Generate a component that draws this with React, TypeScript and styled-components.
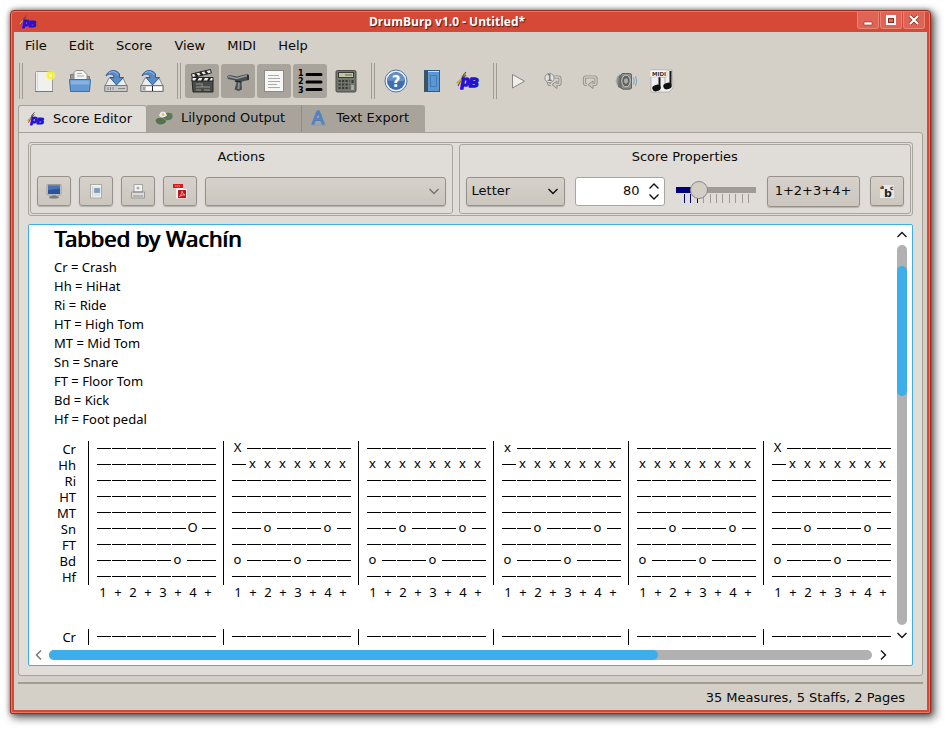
import React from "react";
import styled, { createGlobalStyle, css } from "styled-components";

const ui = `"DejaVu Sans", sans-serif`;
const scoreFont = `"Noto Sans", sans-serif`;

const GlobalStyle = createGlobalStyle`
  *, *::before, *::after { box-sizing: border-box; }
  html, body { margin: 0; background: #fff; }
  button, input, select { font: inherit; color: inherit; margin: 0; }
  svg { display: block; flex: none; }
`;

const Desktop = styled.div`
  display: flex;
  min-height: 100vh;
  padding: 10px 16px 16px 10px;
  font: 13px/18px ${ui};
  color: #0a0a0a;
`;

const Window = styled.div`
  flex: 1;
  min-width: 0;
  display: flex;
  flex-direction: column;
  background: #d4cfc7;
  border: 1px solid #9c2c20;
  border-radius: 4px 4px 2px 2px;
  box-shadow: inset 0 0 0 1px #e8796a, inset 0 0 0 3px #d64937,
    3px 3px 8px 1px rgba(0, 0, 0, 0.6), 0 0 5px rgba(0, 0, 0, 0.4);
  padding: 1px 3px 3px;
`;

const TitleBar = styled.header`
  display: flex;
  align-items: center;
  height: 20px;
  background: #d64937;
  color: #fff;
  padding: 0 2px 0 5px;
`;

const Caption = styled.h1`
  flex: 1;
  margin: 0;
  font: bold 12px/18px "Open Sans", sans-serif;
  text-align: center;
  text-shadow: 1px 1px 1px rgba(60, 10, 5, 0.8);
`;

const Controls = styled.div`
  align-self: start;
  display: flex;
  gap: 1px;
`;

const ControlButton = styled.button`
  display: flex;
  align-items: center;
  justify-content: center;
  width: 22px;
  height: 17px;
  padding: 0;
  border: 1px solid #e88476;
  border-top: 0;
  border-radius: 0 0 3px 3px;
  background: #de6455;
`;

const MenuBar = styled.nav`
  display: flex;
  padding: 5px 0;
`;

const MenuItem = styled.button`
  border: 0;
  background: none;
  padding: 0 11px;
  line-height: 18px;
`;

const ToolBar = styled.div`
  display: flex;
  gap: 8px;
  padding: 3px 5px 6px;
`;

const ToolGroup = styled.div`
  display: flex;
  align-items: center;
  gap: 2px;
  height: 36px;
`;

const Handle = styled.span`
  width: 4px;
  height: 36px;
  margin-right: 2px;
  border: solid #a09c95;
  border-width: 0 1px;
`;

const ToolButton = styled.button<{ $on?: boolean }>`
  display: flex;
  align-items: center;
  justify-content: center;
  width: 34px;
  height: 34px;
  padding: 0;
  border: 0;
  border-radius: 3px;
  background: ${(p) => (p.$on ? "#a8a49c" : "none")};
`;

const TabList = styled.div`
  display: flex;
  padding: 0 4px;
  height: 27px;
`;

const Tab = styled.button<{ $active?: boolean }>`
  display: flex;
  align-items: center;
  gap: 8px;
  border: 0;
  white-space: nowrap;
  ${(p) =>
    p.$active
      ? css`
          height: 28px;
          padding: 0 14px 2px 8px;
          background: #e0ddd8;
          border: 1px solid #a5a199;
          border-bottom: 0;
          border-radius: 3px 3px 0 0;
        `
      : css`
          height: 27px;
          padding: 0 16px 1px 8px;
          background: #a8a49c;
          border-right: 1px solid #918d86;
          &:last-child {
            border-right: 0;
            border-top-right-radius: 3px;
          }
        `}
`;

const Pane = styled.main`
  flex: 1;
  display: flex;
  flex-direction: column;
  gap: 8px;
  margin: 0 4px;
  padding: 9px;
  background: #e0ddd8;
  border: 1px solid #a5a199;
  border-radius: 0 3px 3px 3px;
`;

const Panels = styled.div`
  display: grid;
  grid-template-columns: minmax(0, 423fr) minmax(0, 453fr);
  gap: 6px;
  padding: 1px;
  border: 1px solid #a9a59e;
  border-radius: 3px;
`;

const Panel = styled.section`
  border: 1px solid #a9a59e;
  border-radius: 3px;
  padding: 3px 6px 6px;
`;

const PanelTitle = styled.h2`
  margin: 0 0 9px;
  font: inherit;
  line-height: 18px;
  text-align: center;
`;

const PanelRow = styled.div<{ $gap: number }>`
  display: flex;
  align-items: center;
  gap: ${(p) => p.$gap}px;
  height: 32px;
`;

const raised = css`
  border: 1px solid #96928b;
  border-radius: 3px;
  background: linear-gradient(#d6d1ca, #cbc6be);
  box-shadow: 0 1px 1px rgba(0, 0, 0, 0.2);
`;

const PushButton = styled.button<{ $wide?: boolean }>`
  ${raised}
  display: flex;
  align-items: center;
  justify-content: center;
  flex: none;
  width: ${(p) => (p.$wide ? 93 : 34)}px;
  height: ${(p) => (p.$wide ? 31 : 30)}px;
  padding: 0;
`;

const SelectBox = styled.div<{ $width?: number }>`
  display: grid;
  align-items: center;
  flex: ${(p) => (p.$width ? `0 0 ${p.$width}px` : "1")};
  > * { grid-area: 1 / 1; }
  > svg { justify-self: end; margin-right: 6px; pointer-events: none; }
`;

const Select = styled.select`
  ${raised}
  appearance: none;
  width: 100%;
  height: 29px;
  padding: 0 22px 0 5px;
`;

const Spin = styled.div`
  display: flex;
  align-items: center;
  flex: none;
  width: 90px;
  height: 29px;
  padding-right: 4px;
  background: #fff;
  border: 1px solid #aaa69f;
  border-radius: 3px;
`;

const SpinInput = styled.input`
  flex: 1;
  width: 0;
  min-width: 0;
  padding: 0 8px 0 0;
  border: 0;
  background: none;
  text-align: right;
  outline: 0;
`;

const SpinArrows = styled.div`
  display: flex;
  flex-direction: column;
  gap: 3px;
`;

const PlainButton = styled.button`
  display: flex;
  align-items: center;
  justify-content: center;
  padding: 0;
  border: 0;
  background: none;
`;

const SliderBox = styled.div`
  flex: 0 0 82px;
  display: grid;
  align-content: start;
  justify-content: center;
  height: 32px;
  padding-top: 6px;
  > * { grid-area: 1 / 1; }
`;

const Slider = styled.input`
  appearance: none;
  width: 80px;
  height: 18px;
  background: linear-gradient(90deg, #00007f 24px, #a09c95 24px) center / 80px 6px no-repeat;
  &::-webkit-slider-thumb {
    appearance: none;
    width: 18px;
    height: 18px;
    border: 1px solid #8d8982;
    border-radius: 50%;
    background: #d3cec6;
  }
`;

const Canvas = styled.div`
  flex: 1;
  display: grid;
  grid-template-columns: minmax(0, 1fr) 21px;
  grid-template-rows: 1fr 20px;
  background: #fff;
  border: 1px solid #3daee9;
  border-radius: 2px;
`;

const Score = styled.article`
  overflow: hidden;
  height: 420px;
  padding: 0 0 0 25px;
  font: 13px/19px ${scoreFont};
  color: #000;
`;

const ScoreTitle = styled.h2`
  margin: 0 0 6px;
  font: 400 22px/27px ${scoreFont};
  text-shadow: 1px 0 0 #000;
`;

const Legend = styled.ul`
  margin: 0 0 12px;
  padding: 0;
  list-style: none;
`;

const Staff = styled.div`
  display: flex;
  margin-bottom: 28px;
`;

const Labels = styled.div`
  flex: 0 0 22px;
  margin-right: 12px;
  text-align: right;
  line-height: 16px;
`;

const Measure = styled.div`
  flex: 0 0 135px;
`;

const Lines = styled.div`
  border-left: 1px solid #000;
  padding-left: 8px;
`;

const Beats = styled.div`
  display: grid;
  grid-template-columns: repeat(8, 15px);
  height: 16px;
  line-height: 16px;
`;

const Counts = styled(Beats)`
  margin-left: 9px;
`;

const Rest = styled.span`
  width: 14px;
  height: 1px;
  margin-top: 7px;
  background: #000;
`;

const Hit = styled.span`
  width: 11px;
  height: 16px;
  line-height: 13px;
  display: flex;
  justify-content: center;
`;

const Count = styled(Hit)`
  width: 12px;
  line-height: 15px;
`;

const VBar = styled.div`
  display: flex;
  flex-direction: column;
  align-items: center;
  > button { height: 20px; width: 20px; }
`;

const HBar = styled.div`
  grid-column: 1 / -1;
  display: flex;
  align-items: center;
  padding-right: 18px;
  > button { height: 20px; width: 20px; }
  > button:last-child { width: 22px; }
`;

const Track = styled.div<{ $vertical?: boolean }>`
  flex: 1;
  display: flex;
  flex-direction: ${(p) => (p.$vertical ? "column" : "row")};
  ${(p) => (p.$vertical ? "width: 10px; padding-top: 21px;" : "height: 10px;")}
  background: #b1b1b1;
  border-radius: 5px;
`;

const Thumb = styled.div<{ $size: string }>`
  flex: 0 0 ${(p) => p.$size};
  background: #3daee9;
  border-radius: 5px;
`;

const StatusBar = styled.footer`
  margin: 6px 4px 0;
  padding: 5px 18px 3px 0;
  border-top: 2px solid #a19d95;
  text-align: right;
  line-height: 18px;
`;

/* ---------- icons ---------- */

const Chevron = ({ dir, color = "#111" }: { dir: "up" | "down" | "left" | "right"; color?: string }) => {
  const d = {
    up: "M1.5 8 6 3.5 10.5 8",
    down: "M1.5 4 6 8.5 10.5 4",
    left: "M8 1.5 3.5 6 8 10.5",
    right: "M4 1.5 8.5 6 4 10.5",
  }[dir];
  return (
    <svg width="12" height="12" viewBox="0 0 12 12" fill="none" stroke={color} strokeWidth="1.4">
      <path d={d} />
    </svg>
  );
};

const SpinChevron = ({ d }: { d: string }) => (
  <svg width="12" height="8" viewBox="0 0 12 8" fill="none" stroke="#111" strokeWidth="1.4">
    <path d={d} />
  </svg>
);

const Logo = ({ size }: { size: number }) => (
  <svg width={size} height={size} viewBox="0 0 24 24">
    <path d="M2 17 8 5M1 14l9-8M6 8 10 3" stroke="#5b5638" strokeWidth="1.2" fill="none" />
    <path d="M1 15 5 10" stroke="#d8b820" strokeWidth="1.6" />
    <g fill="#2412d2" stroke="#2412d2" strokeWidth="1.6" strokeLinejoin="round" fontFamily="Liberation Sans, sans-serif" fontWeight="700" fontStyle="italic">
      <text x="5" y="17" fontSize="14">p</text>
      <text x="13" y="18" fontSize="13">B</text>
    </g>
  </svg>
);

const NewIcon = () => (
  <svg width="24" height="24" viewBox="0 0 24 24">
    <rect x="3.5" y="2.5" width="17" height="20" rx="1" fill="#f0f0ef" stroke="#9a9a97" />
    <path d="M5.5 3v18" stroke="#d8d8d6" />
    <path d="M3 22.5h18" stroke="#77776f" />
    <circle cx="18.500" cy="6.500" r="5" fill="#fdf66a" opacity=".6" />
    <circle cx="18.500" cy="6.500" r="3.400" fill="#fdf327" />
    <circle cx="18.500" cy="6.500" r="1.500" fill="#fffde0" />
  </svg>
);

const OpenIcon = () => (
  <svg width="24" height="24" viewBox="0 0 24 24">
    <path d="M2.5 20V5.500h6l2 2h11V20z" fill="#9a9a96" stroke="#777" />
    <path d="M6 12V3.500l2-2h7l4 4V12z" fill="#f4f4f3" stroke="#8b8b88" />
    <path d="M9 4.500h5M9 7h7" stroke="#aaa" />
    <path d="M1.500 10.500h21l-1 12H2.500z" fill="#6498d2" stroke="#3c6fad" />
    <path d="M2.500 11.500h19l-.3 4H3z" fill="#86b1e0" />
  </svg>
);

const SaveIcon = ({ label }: { label?: boolean }) => (
  <svg width="24" height="24" viewBox="0 0 24 24">
    <path d="M5 9h14l4 8H1z" fill="#ececea" stroke="#8a8a88" />
    <path d="M.8 16.500h22.400v6H.8z" fill="#c9c9c7" stroke="#777" />
    {label ? (
      <>
        <path d="M6 17.500h16v4H6z" fill="#fff" />
        <path d="M12.500 17v5" stroke="#222" />
        <path d="M4 18v3" stroke="#777" />
      </>
    ) : (
      <path d="M4 18v3M6.500 18v3M9 18v3M14 19.500h7" stroke="#888" />
    )}
    <path d="M2 7C4 1 12-.5 15.500 5v3.500h4L12.500 16 6 8.500h4C10 4.500 5 4 2 7z" fill="#5a8ac6" stroke="#2f5c98" />
    <path d="M5 4c3-2 7-2 9 2" stroke="#9abde5" fill="none" />
  </svg>
);

const ClapperIcon = () => (
  <svg width="24" height="24" viewBox="0 0 24 24">
    <path d="M2 11h21v12H3z" fill="#4a4c49" stroke="#252624" />
    <path d="m1.500 5 19-4.500.8 3.500-19 4.500z" fill="#eee" stroke="#222" />
    <path d="m5 4.500 2.500 3M10 3l2.500 3.500M15 2l2.500 3" stroke="#222" strokeWidth="2.200" />
    <path d="M2 8.500h21v3.500H2z" fill="#eee" stroke="#222" />
    <path d="m6 12 2-3.500M12 12l2-3.500M18 12l2-3.500" stroke="#222" strokeWidth="2.200" />
    <path d="M6 15h5M12 14v4M6 18h14M6 21h5M14 21h6" stroke="#989a96" />
  </svg>
);

const DrumIcon = () => (
  <svg width="24" height="24" viewBox="0 0 24 24">
    <path d="m1 7.500 2-1.500 8 1.500 10-2.500 2 1v5l-7 1.500-.5 2 .5 6-3.500 1.500-4-1.500 2-6.500-1-2.500L2 10z" fill="#474d51" />
    <path d="m2 7.500 9 2 10-3" stroke="#959da2" strokeWidth="1.500" fill="none" />
    <path d="m13 13-.5 7" stroke="#899096" strokeWidth="2" />
    <path d="M22 6v5M9 12l6 1" stroke="#25292b" strokeWidth="1.500" />
  </svg>
);

const PageIcon = () => (
  <svg width="24" height="24" viewBox="0 0 24 24">
    <rect x="2.500" y="1.500" width="19" height="21" fill="#f7f7f6" stroke="#8b8b88" />
    <path d="M6 6.500h11M6 9.500h12M6 12.500h12M6 15.500h9M6 18.500h12" stroke="#aaa" />
  </svg>
);

const NumbersIcon = () => (
  <svg width="28" height="26" viewBox="0 0 28 26">
    <g fontFamily="DejaVu Sans, sans-serif" fontWeight="700" fontSize="8" fill="#000">
      <text x="2" y="8">1</text>
      <text x="2" y="16">2</text>
      <text x="2" y="25">3</text>
    </g>
    <path d="M11 6.500h14M11 14h14M11 21.500h14" stroke="#000" strokeWidth="3" strokeLinecap="round" />
  </svg>
);

const CalculatorIcon = () => (
  <svg width="24" height="24" viewBox="0 0 24 24">
    <rect x="2" y="1.500" width="20" height="21.500" rx="1.500" fill="#73756f" stroke="#4b4c49" />
    <rect x="4.500" y="3.500" width="15" height="5" fill="#c0c6a0" stroke="#3a3b35" />
    <path d="M11 6h7" stroke="#666b4c" />
    <g stroke="#393a37" strokeWidth="2.200" strokeDasharray="2.200 1.300">
      <path d="M4.500 12h11M4.500 15.500h11M4.500 19h11" />
    </g>
    <path d="M18.500 11v3" stroke="#393a37" strokeWidth="2" />
    <path d="M18.500 16v5" stroke="#b0b2ae" strokeWidth="2.500" />
  </svg>
);

const HelpIcon = () => (
  <svg width="24" height="24" viewBox="0 0 24 24">
    <circle cx="12" cy="12" r="11" fill="#f2f4f8" stroke="#4a74ad" />
    <circle cx="12" cy="12" r="9" fill="#3f6dae" />
    <path d="M3.500 12a8.500 8.500 0 0 1 17 0c-5 1-11-1-17 0z" fill="#6790c6" />
    <text x="12" y="17.500" textAnchor="middle" fontFamily="DejaVu Sans, sans-serif" fontWeight="700" fontSize="15" fill="#fff">?</text>
  </svg>
);

const BookIcon = () => (
  <svg width="24" height="24" viewBox="0 0 24 24">
    <rect x="4.500" y="1.500" width="15" height="21" fill="#5b97d2" stroke="#2c5b8c" />
    <rect x="4" y="2" width="4" height="20.500" fill="#3e5360" />
    <path d="M8 2.500h11" stroke="#d3dce6" />
    <rect x="10.500" y="6.500" width="6" height="11" fill="none" stroke="#417db8" />
  </svg>
);

const PlayIcon = () => (
  <svg width="24" height="24" viewBox="0 0 24 24">
    <path d="M6.500 5.500v13.500l12-6.800z" fill="#efeeec" stroke="#8a8883" />
  </svg>
);

const LoopIcon = ({ once }: { once?: boolean }) => {
  const ring = "M9 15.500H8A1.500 1.500 0 0 1 6.500 14V9.500A1.500 1.500 0 0 1 8 8h8.500A1.500 1.500 0 0 1 18 9.500V14a1.500 1.500 0 0 1-1.500 1.500H14";
  return (
    <svg width="24" height="24" viewBox="0 0 24 24">
      <path d={ring} fill="none" stroke="#918e88" strokeWidth="3.200" />
      <path d="m15 12-5 3.700 5 3.800z" fill="#c9c6c0" stroke="#918e88" />
      <path d={ring} fill="none" stroke="#d0cdc7" strokeWidth="1.400" />
      {once && (
        <>
          <circle cx="7.500" cy="9" r="4.600" fill="#e6e4e1" stroke="#94918b" />
          <text x="7.500" y="12" textAnchor="middle" fontFamily="DejaVu Sans, sans-serif" fontWeight="700" fontSize="8" fill="#807d78">1</text>
        </>
      )}
    </svg>
  );
};

const SpeakerIcon = () => (
  <svg width="24" height="24" viewBox="0 0 24 24">
    <path d="M6 5q-8 7 0 14" fill="#8d908c" stroke="#b5b7b3" />
    <path d="m5 7 4-3h7l2 2v13l-2 1.500H9L4 18z" fill="#6d706c" />
    <rect x="7" y="4.500" width="10.500" height="15.500" rx="2" fill="#8c8f89" stroke="#60635f" />
    <ellipse cx="12" cy="12" rx="4.200" ry="5.800" fill="#5f625e" stroke="#c2c5bf" />
    <ellipse cx="12" cy="12" rx="2" ry="2.800" fill="#a9aca6" />
    <path d="M19.500 8.500q1.500 3.500 0 7M21.500 7q2.300 5 0 10" stroke="#7f9fc5" fill="none" />
  </svg>
);

const MidiIcon = () => (
  <svg width="24" height="24" viewBox="0 0 24 24">
    <path d="M1 1h21l1 18-4 4H1z" fill="#efefef" stroke="#aaa" strokeWidth=".8" />
    <path d="M9.500 7v12M20.500 2v14" stroke="#161616" strokeWidth="2" />
    <path d="M11 8h4v10" stroke="#aaa" fill="none" />
    <ellipse cx="6.500" cy="19" rx="4.300" ry="3.200" fill="#111" transform="rotate(-15 6.500 19)" />
    <ellipse cx="17.500" cy="17" rx="4.300" ry="3.200" fill="#111" transform="rotate(-15 17.500 17)" />
    <path d="M0 1h17v7H0z" fill="#fafafa" stroke="#bbb" strokeWidth=".6" />
    <text x="2" y="6.800" fontFamily="DejaVu Sans, sans-serif" fontWeight="700" fontSize="5.500" fill="#333">MIDI</text>
  </svg>
);

const LilyIcon = () => (
  <svg width="18" height="18" viewBox="0 0 18 18">
    <path d="M7 7q4-5 10-2.500 2 5-2.500 6.500Q9 12 7 7z" fill="#5d7a55" />
    <path d="M.5 11q2-3 7-2l4 3q-2 3.500-6.500 3.500-4-.5-4.500-4.500z" fill="#56724d" />
    <path d="M4 6.500q3 4 8 0l-1.500-3-2.500-1-2.500 1z" fill="#ecedf0" />
    <circle cx="8" cy="5.500" r="1.500" fill="#eac74e" />
  </svg>
);

const LetterIcon = () => (
  <svg width="18" height="18" viewBox="0 0 18 18">
    <path d="M1 16h15" stroke="#7f9cc4" />
    <text x="8" y="15" textAnchor="middle" fontFamily="DejaVu Sans, sans-serif" fontWeight="400" fontSize="18" fill="#8fb2e0" stroke="#4f7dbb" strokeWidth="1.200">A</text>
  </svg>
);

const MonitorIcon = () => (
  <svg width="16" height="16" viewBox="0 0 16 16">
    <rect x="1" y="1.500" width="14" height="10.500" rx=".5" fill="#ddd" stroke="#999a97" />
    <rect x="2" y="2.500" width="12" height="8.500" fill="#2c539a" />
    <path d="M2 7V2.500h12v3z" fill="#4a74b9" />
    <path d="M6 12.500h4v1H6z" fill="#777" />
    <ellipse cx="8" cy="14.300" rx="5" ry="1.200" fill="#777a76" />
  </svg>
);

const PreviewIcon = () => (
  <svg width="16" height="16" viewBox="0 0 16 16">
    <rect x="2.500" y="1.500" width="11" height="13.500" fill="#f1f1f0" stroke="#aaaaa7" />
    <path d="M4.500 3v11" stroke="#d3d3d1" />
    <rect x="6" y="5" width="6" height="5" fill="#7d9cc3" stroke="#b6bfca" strokeWidth=".5" />
    <path d="M6 12h6" stroke="#ccc" />
  </svg>
);

const PrinterIcon = () => (
  <svg width="16" height="16" viewBox="0 0 16 16">
    <rect x="4" y="1.500" width="8.500" height="8" fill="#f3f3f3" stroke="#a6a6a3" />
    <circle cx="8" cy="5" r="1.500" fill="#aab" />
    <path d="M1.500 9h13v6h-13z" fill="#dcdcda" stroke="#999996" />
    <path d="M3 9h10M3 13h10" stroke="#8a8a88" />
  </svg>
);

const PdfIcon = () => (
  <svg width="16" height="16" viewBox="0 0 16 16">
    <path d="M4 2h7l4 4v9.500H4z" fill="#fafafa" stroke="#ccc" strokeWidth=".6" />
    <path d="M11 2v4h4z" fill="#ccc" />
    <rect x="1" y="1" width="10" height="4" fill="#d31e1e" />
    <path d="M3 3h5" stroke="#f3a5a5" strokeDasharray="1.500 .5" />
    <rect x="6" y="7" width="8" height="8" fill="#c41515" />
    <path d="M7.500 13.500Q10 11 10 8q1 4 3 4-3-.5-5.500 1.500" stroke="#f8b9b9" strokeWidth=".8" fill="none" />
  </svg>
);

const LyricsIcon = () => (
  <svg width="16" height="16" viewBox="0 0 16 16">
    <rect x="1" y="2" width="14" height="13" fill="#e8e8e7" />
    <g fontFamily="DejaVu Sans, sans-serif" fontWeight="700" fill="#222">
      <text x="1" y="6" fontSize="6">a</text>
      <text x="5" y="14" fontSize="11">b</text>
      <text x="11" y="7" fontSize="6">c</text>
    </g>
  </svg>
);

const Ticks = () => (
  <svg width="80" height="26" viewBox="0 0 80 26" shapeRendering="crispEdges">
    {Array.from({ length: 11 }, (_, i) => (
      <path key={i} d={`M${Math.round(8 + i * 6.4)}.5 13v9`} stroke={i < 3 ? "#00007f" : "#a09c95"} />
    ))}
  </svg>
);

/* ---------- data ---------- */

const menus = ["File", "Edit", "Score", "View", "MIDI", "Help"];

type Tool = { name: string; icon: React.ReactNode; on?: boolean };
const toolGroups: Tool[][] = [
  [
    { name: "New", icon: <NewIcon /> },
    { name: "Open", icon: <OpenIcon /> },
    { name: "Save", icon: <SaveIcon /> },
    { name: "Save as", icon: <SaveIcon label /> },
  ],
  [
    { name: "Show score info", icon: <ClapperIcon />, on: true },
    { name: "Show kit", icon: <DrumIcon />, on: true },
    { name: "Show page", icon: <PageIcon />, on: true },
    { name: "Show counts", icon: <NumbersIcon />, on: true },
    { name: "Calculator", icon: <CalculatorIcon /> },
  ],
  [
    { name: "Help", icon: <HelpIcon /> },
    { name: "Manual", icon: <BookIcon /> },
    { name: "About DrumBurp", icon: <Logo size={24} /> },
  ],
  [
    { name: "Play", icon: <PlayIcon /> },
    { name: "Loop once", icon: <LoopIcon once /> },
    { name: "Loop", icon: <LoopIcon /> },
    { name: "Mute", icon: <SpeakerIcon /> },
    { name: "Export MIDI", icon: <MidiIcon /> },
  ],
];

const actions: Tool[] = [
  { name: "Fit screen", icon: <MonitorIcon /> },
  { name: "Print preview", icon: <PreviewIcon /> },
  { name: "Print", icon: <PrinterIcon /> },
  { name: "Export PDF", icon: <PdfIcon /> },
];

const kit = [
  ["Cr", "Crash"],
  ["Hh", "HiHat"],
  ["Ri", "Ride"],
  ["HT", "High Tom"],
  ["MT", "Mid Tom"],
  ["Sn", "Snare"],
  ["FT", "Floor Tom"],
  ["Bd", "Kick"],
  ["Hf", "Foot pedal"],
];

const EMPTY = "--------";
type Bar = Record<string, string>;
const groove: Bar = { Hh: "xxxxxxxx", Sn: "--o---o-", Bd: "o---o---" };
const crash = (hit: string): Bar => ({ ...groove, Cr: `${hit}-------`, Hh: "-xxxxxxx" });
const bars: Bar[] = [{ Sn: "------O-", Bd: "-----o--" }, crash("X"), groove, crash("x"), groove, crash("X")];

const StaffView = ({ drums, measures, counts }: { drums: string[]; measures: Bar[]; counts?: boolean }) => (
  <Staff>
    <Labels>
      {drums.map((d) => (
        <div key={d}>{d}</div>
      ))}
    </Labels>
    {measures.map((bar, i) => (
      <Measure key={i}>
        <Lines>
          {drums.map((d) => (
            <Beats key={d}>
              {[...(bar[d] ?? EMPTY)].map((c, j) => (c === "-" ? <Rest key={j} /> : <Hit key={j}>{c}</Hit>))}
            </Beats>
          ))}
        </Lines>
        {counts && (
          <Counts>
            {[..."1+2+3+4+"].map((c, j) => (
              <Count key={j}>{c}</Count>
            ))}
          </Counts>
        )}
      </Measure>
    ))}
  </Staff>
);

export default function App() {
  return (
    <>
      <GlobalStyle />
      <Desktop>
        <Window>
          <TitleBar>
            <Logo size={18} />
            <Caption>DrumBurp v1.0 - Untitled*</Caption>
            <Controls>
              <ControlButton aria-label="Minimize">
                <svg width="12" height="12"><path d="M2 8h8v3H2z" fill="#fff" stroke="#8d2a1d" strokeWidth=".6" /></svg>
              </ControlButton>
              <ControlButton aria-label="Maximize">
                <svg width="12" height="12" shapeRendering="crispEdges">
                  <path d="M1 1h10v10H1z" fill="#fff" />
                  <path d="M3 4h6v5H3z" fill="#8d2a1d" />
                  <path d="M4 5h4v3H4z" fill="#de6455" />
                </svg>
              </ControlButton>
              <ControlButton aria-label="Close">
                <svg width="12" height="12">
                  <path d="m2 2 8 8M10 2l-8 8" stroke="#8d2a1d" strokeWidth="3.600" />
                  <path d="m2 2 8 8M10 2l-8 8" stroke="#fff" strokeWidth="2.200" />
                </svg>
              </ControlButton>
            </Controls>
          </TitleBar>

          <MenuBar>
            {menus.map((m) => (
              <MenuItem key={m}>{m}</MenuItem>
            ))}
          </MenuBar>

          <ToolBar>
            {toolGroups.map((group, i) => (
              <ToolGroup key={i}>
                <Handle />
                {group.map((t) => (
                  <ToolButton key={t.name} $on={t.on} aria-label={t.name} aria-pressed={t.on}>
                    {t.icon}
                  </ToolButton>
                ))}
              </ToolGroup>
            ))}
          </ToolBar>

          <TabList role="tablist">
            <Tab role="tab" aria-selected $active><Logo size={18} />Score Editor</Tab>
            <Tab role="tab" aria-selected={false}><LilyIcon />Lilypond Output</Tab>
            <Tab role="tab" aria-selected={false}><LetterIcon />Text Export</Tab>
          </TabList>

          <Pane>
            <Panels>
              <Panel>
                <PanelTitle>Actions</PanelTitle>
                <PanelRow $gap={8}>
                  {actions.map((a) => (
                    <PushButton key={a.name} aria-label={a.name}>{a.icon}</PushButton>
                  ))}
                  <SelectBox>
                    <Select aria-label="Recent action"><option></option></Select>
                    <Chevron dir="down" color="#77736c" />
                  </SelectBox>
                </PanelRow>
              </Panel>
              <Panel>
                <PanelTitle>Score Properties</PanelTitle>
                <PanelRow $gap={10}>
                  <SelectBox $width={99}>
                    <Select aria-label="Paper size"><option>Letter</option></Select>
                    <Chevron dir="down" />
                  </SelectBox>
                  <Spin>
                    <SpinInput aria-label="Tempo" defaultValue="80" inputMode="numeric" />
                    <SpinArrows>
                      <PlainButton aria-label="Increase"><SpinChevron d="M1.500 6.500 6 2l4.500 4.500" /></PlainButton>
                      <PlainButton aria-label="Decrease"><SpinChevron d="M1.500 1.500 6 6l4.500-4.500" /></PlainButton>
                    </SpinArrows>
                  </Spin>
                  <SliderBox>
                    <Ticks />
                    <Slider type="range" aria-label="Spacing" min={0} max={100} defaultValue={24} />
                  </SliderBox>
                  <PushButton $wide>1+2+3+4+</PushButton>
                  <PushButton aria-label="Lyrics"><LyricsIcon /></PushButton>
                </PanelRow>
              </Panel>
            </Panels>

            <Canvas>
              <Score>
                <ScoreTitle>Tabbed by Wachín</ScoreTitle>
                <Legend>
                  {kit.map(([k, name]) => (
                    <li key={k}>{k} = {name}</li>
                  ))}
                </Legend>
                <StaffView drums={kit.map(([k]) => k)} measures={bars} counts />
                <StaffView drums={["Cr"]} measures={[{}, {}, {}, {}, {}, {}]} />
              </Score>
              <VBar>
                <PlainButton aria-label="Scroll up"><Chevron dir="up" /></PlainButton>
                <Track $vertical><Thumb $size="130px" /></Track>
                <PlainButton aria-label="Scroll down"><Chevron dir="down" /></PlainButton>
              </VBar>
              <HBar>
                <PlainButton aria-label="Scroll left"><Chevron dir="left" color="#77736c" /></PlainButton>
                <Track><Thumb $size="74%" /></Track>
                <PlainButton aria-label="Scroll right"><Chevron dir="right" /></PlainButton>
              </HBar>
            </Canvas>
          </Pane>

          <StatusBar>35 Measures, 5 Staffs, 2 Pages</StatusBar>
        </Window>
      </Desktop>
    </>
  );
}
